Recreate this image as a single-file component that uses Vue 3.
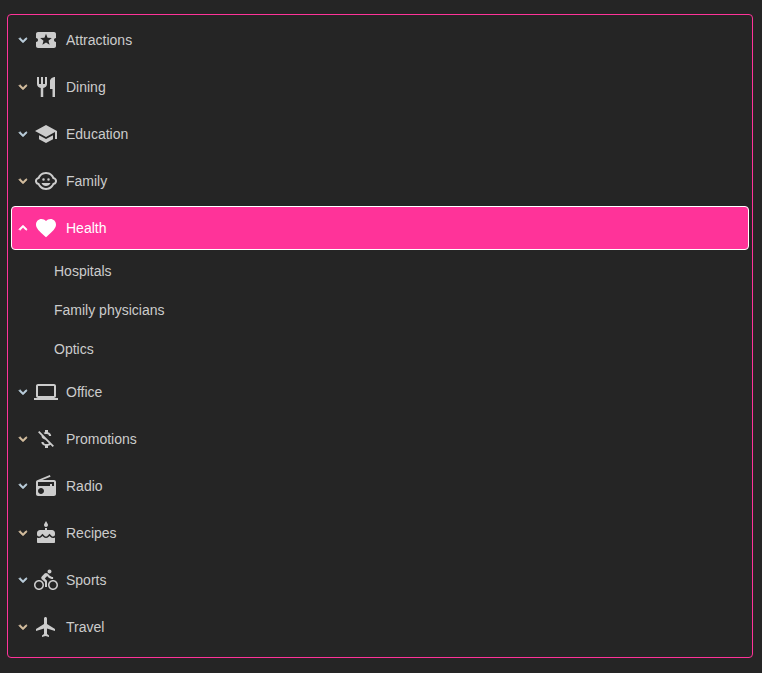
<script setup>
const paths = {
  ticket: 'M20 12c0-1.1.9-2 2-2V6c0-1.1-.9-2-2-2H4c-1.1 0-1.99.9-1.99 2v4c1.1 0 1.99.9 1.99 2s-.89 2-2 2v4c0 1.1.9 2 2 2h16c1.1 0 2-.9 2-2v-4c-1.1 0-2-.9-2-2zm-4.42 4.8L12 14.5l-3.58 2.3 1.08-4.12-3.29-2.69 4.24-.25L12 5.8l1.54 3.95 4.24.25-3.29 2.69 1.09 4.11z',
  fork: 'M11 9H9V2H7v7H5V2H3v7c0 2.12 1.66 3.84 3.75 3.97V22h2.5v-9.03C11.34 12.84 13 11.12 13 9V2h-2v7zm5-3v8h2.5v8H21V2c-2.76 0-5 2.24-5 4z',
  school: 'M5 13.18v4L12 21l7-3.82v-4L12 17l-7-3.82zM12 3L1 9l11 6 9-4.91V17h2V9L12 3z',
  child: 'M9.5 9.25a1.25 1.25 0 1 0 0 2.5 1.25 1.25 0 0 0 0-2.5zM14.5 9.25a1.25 1.25 0 1 0 0 2.5 1.25 1.25 0 0 0 0-2.5zM22.94 12.66c.04-.21.06-.43.06-.66s-.02-.45-.06-.66c-.25-1.51-1.36-2.74-2.81-3.17-.53-1.12-1.28-2.1-2.19-2.91C16.36 3.85 14.28 3 12 3s-4.36.85-5.94 2.26c-.92.81-1.67 1.8-2.19 2.91-1.45.43-2.56 1.65-2.81 3.17-.04.21-.06.43-.06.66s.02.45.06.66c.25 1.51 1.36 2.74 2.81 3.17.52 1.11 1.27 2.09 2.17 2.89C7.62 20.14 9.71 21 12 21s4.38-.86 5.97-2.28c.9-.8 1.65-1.79 2.17-2.89 1.44-.43 2.55-1.65 2.8-3.17zM19 14c-.1 0-.19-.02-.29-.03-.2.67-.49 1.29-.86 1.86C16.6 17.74 14.45 19 12 19s-4.6-1.26-5.85-3.17c-.37-.57-.66-1.19-.86-1.86-.1.01-.19.03-.29.03-1.1 0-2-.9-2-2s.9-2 2-2c.1 0 .19.02.29.03.2-.67.49-1.29.86-1.86C7.4 6.26 9.55 5 12 5s4.6 1.26 5.85 3.17c.37.57.66 1.19.86 1.86.1-.01.19-.03.29-.03 1.1 0 2 .9 2 2s-.9 2-2 2zM7.5 14c.76 1.77 2.49 3 4.5 3s3.74-1.23 4.5-3h-9z',
  heart: 'M12 21.35l-1.45-1.32C5.4 15.36 2 12.28 2 8.5 2 5.42 4.42 3 7.5 3c1.74 0 3.41.81 4.5 2.09C13.09 3.81 14.76 3 16.5 3 19.58 3 22 5.42 22 8.5c0 3.78-3.4 6.86-8.55 11.54L12 21.35z',
  laptop: 'M20 18c1.1 0 1.99-.9 1.99-2L22 6c0-1.1-.9-2-2-2H4c-1.1 0-2 .9-2 2v10c0 1.1.9 2 2 2H0v2h24v-2h-4zM4 6h16v10H4V6z',
  money: 'M12.5 6.9c1.78 0 2.44.85 2.5 2.1h2.21c-.07-1.72-1.12-3.3-3.21-3.81V3h-3v2.16c-.53.12-1.03.3-1.48.54l1.47 1.47c.41-.17.91-.27 1.51-.27zM5.33 4.06L4.06 5.33 7.5 8.77c0 2.08 1.56 3.21 3.91 3.91l3.51 3.51c-.34.48-1.05.91-2.42.91-2.06 0-2.87-.92-2.98-2.1h-2.2c.12 2.19 1.76 3.42 3.68 3.83V21h3v-2.15c.96-.18 1.83-.55 2.45-1.12l2.22 2.22 1.27-1.27L5.33 4.06z',
  radio: 'M3.24 6.15C2.51 6.43 2 7.17 2 8v12c0 1.1.89 2 2 2h16c1.11 0 2-.9 2-2V8c0-1.11-.89-2-2-2H8.3l8.26-3.34L15.88 1 3.24 6.15zM7 20c-1.66 0-3-1.34-3-3s1.34-3 3-3 3 1.34 3 3-1.34 3-3 3zm13-8h-2v-2h-2v2H4V8h16v4z',
  cake: 'M12 6c1.11 0 2-.9 2-2 0-.38-.1-.73-.29-1.03L12 0l-1.71 2.97c-.19.3-.29.65-.29 1.03 0 1.1.9 2 2 2zm4.6 9.99l-1.07-1.07-1.08 1.07c-1.3 1.3-3.58 1.31-4.89 0l-1.07-1.07-1.09 1.07C6.75 16.64 5.88 17 4.96 17c-.73 0-1.4-.23-1.96-.61V21c0 .55.45 1 1 1h16c.55 0 1-.45 1-1v-4.61c-.56.38-1.23.61-1.96.61-.92 0-1.79-.36-2.44-1.01zM18 9h-5V7h-2v2H6c-1.66 0-3 1.34-3 3v1.54c0 1.08.88 1.96 1.96 1.96.52 0 1.02-.2 1.38-.57l2.14-2.13 2.13 2.13c.74.74 2.03.74 2.77 0l2.14-2.13 2.13 2.13c.37.37.86.57 1.38.57 1.08 0 1.96-.88 1.96-1.96V12C21 10.34 19.66 9 18 9z',
  bike: 'M15.5 5.5c1.1 0 2-.9 2-2s-.9-2-2-2-2 .9-2 2 .9 2 2 2zM5 12c-2.8 0-5 2.2-5 5s2.2 5 5 5 5-2.2 5-5-2.2-5-5-5zm0 8.5c-1.9 0-3.5-1.6-3.5-3.5s1.6-3.5 3.5-3.5 3.5 1.6 3.5 3.5-1.6 3.5-3.5 3.5zm5.8-10l2.4-2.4.8.8c1.3 1.3 3 2.1 5.1 2.1V9c-1.5 0-2.7-.6-3.6-1.5l-1.9-1.9c-.5-.4-1-.6-1.6-.6s-1.1.2-1.4.6L7.8 8.4c-.4.4-.6.9-.6 1.4 0 .6.2 1.1.6 1.4L11 14v5h2v-6.2l-2.2-2.3zM19 12c-2.8 0-5 2.2-5 5s2.2 5 5 5 5-2.2 5-5-2.2-5-5-5zm0 8.5c-1.9 0-3.5-1.6-3.5-3.5s1.6-3.5 3.5-3.5 3.5 1.6 3.5 3.5-1.6 3.5-3.5 3.5z',
  plane: 'M21 16v-2l-8-5V3.5c0-.83-.67-1.5-1.5-1.5S10 2.67 10 3.5V9l-8 5v2l8-2.5V19l-2 1.5V22l3.5-1 3.5 1v-1.5L13 19v-5.5l8 2.5z'
}
const chevron = 'M16.59 8.59L12 13.17 7.41 8.59 6 10l6 6 6-6z'
const items = [
  { label: 'Attractions', icon: 'ticket' },
  { label: 'Dining', icon: 'fork', warm: true },
  { label: 'Education', icon: 'school' },
  { label: 'Family', icon: 'child', warm: true },
  { label: 'Health', icon: 'heart', open: true, children: ['Hospitals', 'Family physicians', 'Optics'] },
  { label: 'Office', icon: 'laptop' },
  { label: 'Promotions', icon: 'money', warm: true },
  { label: 'Radio', icon: 'radio' },
  { label: 'Recipes', icon: 'cake', warm: true },
  { label: 'Sports', icon: 'bike' },
  { label: 'Travel', icon: 'plane', warm: true }
]
</script>

<template>
  <div class="page">
    <nav class="menu">
      <template v-for="item in items" :key="item.label">
        <div class="row" :class="{ active: item.open }">
          <svg class="chev" :class="{ up: item.open, warm: item.warm }" viewBox="0 0 24 24"><path :d="chevron" /></svg>
          <svg class="icon" viewBox="0 0 24 24"><path :d="paths[item.icon]" /></svg>
          <span class="label">{{ item.label }}</span>
        </div>
        <div v-if="item.children" class="sub">
          <div v-for="c in item.children" :key="c" class="sub-row">{{ c }}</div>
        </div>
      </template>
    </nav>
  </div>
</template>

<style>
html, body { margin: 0; background: #252525; }
</style>

<style scoped>
.page {
  height: 673px;
  box-sizing: border-box;
  padding: 14px 9px 15px 7px;
  background: #252525;
  font-family: "Liberation Sans", Arial, sans-serif;
  font-size: 14px;
}
.menu {
  height: 644px;
  box-sizing: border-box;
  border: 1px solid #ff3399;
  border-radius: 4px;
  padding: 3px 3px 2px;
}
.row {
  height: 44px;
  margin-bottom: 3px;
  box-sizing: border-box;
  display: flex;
  align-items: center;
  padding-left: 3px;
  color: #cccccc;
  border: 1px solid transparent;
  border-radius: 4px;
}
.row.active {
  background: #ff3399;
  border-color: #fff;
  color: #fff;
  margin-bottom: 1px;
}
.chev { width: 16px; height: 16px; fill: #bcd0de; stroke: #bcd0de; stroke-width: 1.4; flex: none; }
.chev.warm { fill: #d6c0a0; stroke: #d6c0a0; }
.chev.up { transform: rotate(180deg); fill: #fff; stroke: #fff; }
.icon { width: 24px; height: 24px; margin-left: 3px; fill: #cccccc; flex: none; }
.active .icon { fill: #fff; }
.label { margin-left: 8px; }
.sub { margin-bottom: 2px; }
.sub-row {
  height: 39px;
  display: flex;
  align-items: center;
  padding-left: 43px;
  color: #cccccc;
}
</style>
